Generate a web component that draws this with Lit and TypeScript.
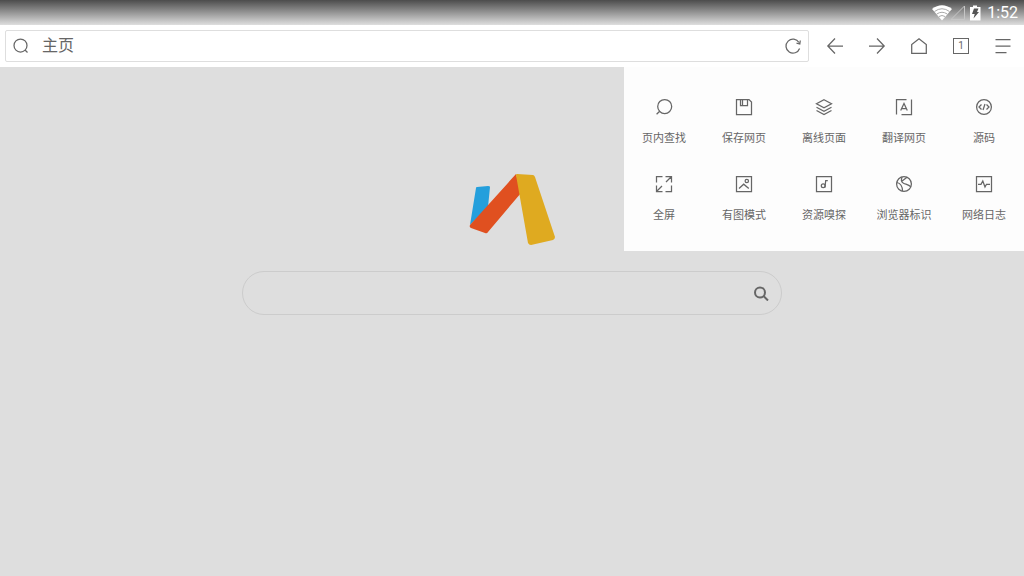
import { LitElement, html, svg, css } from "lit";
import { customElement, property } from "lit/decorators.js";

const shapes: Record<string, unknown> = {
  magnifier: svg`<circle cx="7.5" cy="7.5" r="6.5"/><path d="M12 12L14.5 14.5"/>`,
  reload: svg`<path d="M14.6 10.5A7 7 0 1 1 14 4.500M15.300 2.500L14.800 6L11.500 5.200"/>`,
  back: svg`<path d="M16 8H.8M8 .5L.8 8L8 15.500"/>`,
  forward: svg`<path d="M0 8H15.200M8 .5L15.200 8L8 15.500"/>`,
  home: svg`<path d="M.7 6.500V15.400H15.300V6.500L8 .7Z"/>`,
  menu: svg`<path d="M.5 1.500H15.500M.5 8H15.500M.5 14.500H11.500"/>`,
  find: svg`<circle cx="8.700" cy="7.500" r="7"/><path d="M3.700 12.300L.6 15.300"/>`,
  save: svg`<path d="M.5 .5H13L15.500 3V15.500H.5ZM4.500 .5V6.500H11.500V.5M6.500 1V6"/>`,
  layers: svg`<path d="M8 .7L15.500 4.700L8 8.700L.5 4.700ZM.5 8.200L8 12.200L15.500 8.200M.5 11.500L8 15.500L15.500 11.500"/>`,
  translate: svg`<path d="M10.500 .5H.5V15.500M5.500 15.500H15.500V.5M4.700 11.500L8 4.500L11.300 11.500M6 9.500H10"/>`,
  source: svg`<circle cx="8" cy="8" r="7.400"/><path d="M5.500 5.500L3 8L5.500 10.500M10.500 5.500L13 8L10.500 10.500M9 5L7 11"/>`,
  fullscreen: svg`<path d="M.5 6.500V.5H6.500M9.500 .5H15.500V6.500M15.500 9.500V15.500H9.500M6.500 15.500H.5V9.500M15.500 .5L10 6M.5 15.500L6 10"/>`,
  image: svg`<path d="M.5 .5H15.500V15.500H.5ZM3 12.500L7.700 8.200L12.800 12.500"/><circle cx="10.800" cy="5" r="1.700"/>`,
  sniff: svg`<path d="M.5 .5H15.500V15.500H.5ZM11.800 4.500H9.700L9 11.500"/><circle cx="7.200" cy="9.700" r="1.900"/>`,
  globe: svg`<circle cx="8" cy="8" r="7.400"/><path d="M6 .9C5 4.500 5 6 7.500 7.200S12.500 8.500 14.800 10.800M.7 6.500C4.500 7.200 6.500 10 6.500 15.200M5.500 5.500L11 1.300"/>`,
  log: svg`<path d="M.5 .5H15.500V15.500H.5ZM2 8.300H5L6.800 5L9 11L10.500 8.300H14"/>`,
};

@customElement("line-icon")
class LineIcon extends LitElement {
  @property() name = "";
  static styles = css`
    :host { display: block; width: 16px; height: 16px; flex: none; }
    svg { display: block; overflow: visible; fill: none; stroke: currentColor; stroke-width: 1.25; }
  `;
  render() {
    return html`<svg width="16" height="16" viewBox="0 0 16 16" aria-hidden="true">${shapes[this.name]}</svg>`;
  }
}

const tools = [
  ["find", "页内查找"], ["save", "保存网页"], ["layers", "离线页面"], ["translate", "翻译网页"], ["source", "源码"],
  ["fullscreen", "全屏"], ["image", "有图模式"], ["sniff", "资源嗅探"], ["globe", "浏览器标识"], ["log", "网络日志"],
];

@customElement("app-root")
class AppRoot extends LitElement {
  static styles = css`
    :host {
      display: flex; flex-direction: column; min-height: 100vh;
      background: #dedede; color: #666;
      font-family: Roboto, "Noto Sans CJK SC", sans-serif;
    }
    * { box-sizing: border-box; }
    button { border: 0; padding: 0; background: none; color: inherit; font: inherit; }
    input { border: 0; padding: 0; background: none; color: inherit; font: inherit; outline: 0; flex: 1; min-width: 0; }
    .status {
      height: 25px; padding-right: 6px; display: flex; justify-content: flex-end; align-items: center;
      background: linear-gradient(#4c4c4c, #dedede); color: #fff; font-size: 16px; line-height: 24px;
    }
    .status svg { margin-right: 5px; }
    .toolbar { height: 42px; display: flex; align-items: center; padding-left: 5px; background: #fff; }
    .address {
      flex: 1; height: 32px; display: flex; align-items: center; gap: 13px; padding: 0 7px;
      border: 1px solid #dedede; border-radius: 2px; margin-right: 5px;
    }
    .address input { height: 24px; font-size: 16px; line-height: 24px; }
    .nav { width: 42px; height: 42px; display: grid; place-items: center; }
    .tabs { width: 16px; height: 16px; border: 1px solid currentColor; font-size: 10px; line-height: 14px; text-align: center; }
    main { flex: 1; position: relative; display: flex; flex-direction: column; align-items: center; padding-top: 104px; }
    .logo { display: block; margin-bottom: 26px; }
    .search {
      width: 540px; max-width: 90%; height: 44px; display: flex; align-items: center; padding: 0 12px 0 20px;
      border: 1px solid #ccc; border-radius: 22px;
    }
    .search svg { display: block; }
    .panel {
      position: absolute; top: 0; right: 0; width: 400px; padding: 21px 0 22px; background: #fdfdfd;
      display: grid; grid-template-columns: repeat(5, 1fr); row-gap: 13px;
    }
    .tool { display: flex; flex-direction: column; align-items: center; gap: 16px; padding: 11px 0 5px; font-size: 11px; line-height: 16px; white-space: nowrap; }
  `;
  render() {
    return html`
      <header>
        <div class="status">
          <svg width="50" height="18" viewBox="0 0 50 18" fill="none" aria-hidden="true">
            <path d="M0 5Q10-2.500 20 5L10 16.500Z" fill="#fff"/>
            <path d="M2.500 7.500Q10 2 17.500 7.500M4.800 10Q10 6.500 15.200 10M7 12.500Q10 10.500 13 12.500" stroke="#aaa"/>
            <path d="M32.500 2V15.500H19Z" stroke="#c6c6c6"/>
            <path d="M38 3H41V1.500H45V3H48.500V16.500H38Z" fill="#fff"/>
            <path d="M42 4.500H46.500L45 8H47L41.500 14.500L42.700 10H40Z" fill="#555"/>
          </svg>
          <span>1:52</span>
        </div>
        <nav class="toolbar">
          <div class="address">
            <line-icon name="magnifier"></line-icon>
            <input aria-label="地址" value="主页">
            <button aria-label="刷新"><line-icon name="reload"></line-icon></button>
          </div>
          <button class="nav" aria-label="后退"><line-icon name="back"></line-icon></button>
          <button class="nav" aria-label="前进"><line-icon name="forward"></line-icon></button>
          <button class="nav" aria-label="主页"><line-icon name="home"></line-icon></button>
          <button class="nav" aria-label="标签页"><span class="tabs">1</span></button>
          <button class="nav" aria-label="菜单"><line-icon name="menu"></line-icon></button>
        </nav>
      </header>
      <main>
        <svg class="logo" width="86" height="74" viewBox="0 0 86 74" aria-hidden="true">
          <path d="M7 17Q7 16 8 16L19 15Q21 15 21 16L19 36L1 54Z" fill="#249fdc"/>
          <path d="M47 3L52 22L19 61Q18 63 16 62L2 57Q0 56 1 54Z" fill="#e05020"/>
          <path d="M47 4Q47 3 48 3L64 4Q65 4 66 6L86 66Q86 68 84 69L62 74Q60 74 59 72Z" fill="#dfaa20"/>
        </svg>
        <form class="search">
          <input aria-label="搜索">
          <button type="button" aria-label="搜索">
            <svg width="16" height="16" viewBox="0 0 16 16" fill="none" stroke="#666" stroke-width="2"><circle cx="7" cy="7.500" r="5"/><path d="M10.500 11L15 15.500"/></svg>
          </button>
        </form>
        <div class="panel">
          ${tools.map(([icon, label]) => html`<button class="tool"><line-icon name=${icon}></line-icon><span>${label}</span></button>`)}
        </div>
      </main>
    `;
  }
}
